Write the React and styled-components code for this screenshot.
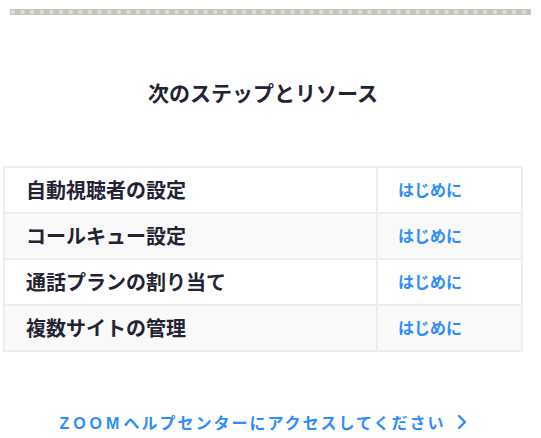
import React from "react";
import styled, { createGlobalStyle } from "styled-components";

const FONT = `"Noto Sans CJK JP", "Noto Sans", sans-serif`;
const BLUE = "#2D8CFF";
const INK = "#232333";
const LINE = "#ededed";

const GlobalStyle = createGlobalStyle`
  body {
    margin: 0;
    background: #ffffff;
    font-family: ${FONT};
  }
`;

const Page = styled.div({
  width: 541,
  height: 438,
  overflow: "hidden",
});

const DotBar = styled.div({
  margin: "9px 10px 0",
  height: 6,
  backgroundColor: "#c5c6b9",
  backgroundImage: "radial-gradient(circle, #dcdde3 2px, transparent 2.4px)",
  backgroundSize: "9.65px 6px",
  backgroundPosition: "-2px 0",
});

const Content = styled.div({
  width: 520,
  marginLeft: 3,
});

const Title = styled.h2({
  margin: "62px 0 0",
  height: 30,
  lineHeight: "30px",
  fontSize: 21,
  fontWeight: 700,
  color: INK,
  textAlign: "center",
});

const Table = styled.table({
  marginTop: 59,
  width: 520,
  borderCollapse: "collapse",
  border: `2px solid ${LINE}`,
  fontFamily: FONT,
});

const Row = styled.tr(({ $shaded }) => ({
  height: 46,
  background: $shaded ? "#f9f9f9" : "#ffffff",
}));

const NameCell = styled.td({
  border: `2px solid ${LINE}`,
  padding: "0 0 2px 21px",
  width: 350,
  fontSize: 20,
  fontWeight: 700,
  color: INK,
});

const LinkCell = styled.td({
  border: `2px solid ${LINE}`,
  padding: "0 0 2px 20px",
  fontSize: 16,
  fontWeight: 700,
  color: BLUE,
});

const Footer = styled.a({
  display: "flex",
  alignItems: "center",
  justifyContent: "center",
  gap: 11,
  marginTop: 58,
  fontSize: 16,
  fontWeight: 700,
  letterSpacing: 2,
  color: BLUE,
  textDecoration: "none",
  svg: {
    width: 10,
    height: 16,
  },
});

const Latin = styled.span({
  fontFamily: `"Liberation Sans", Arial, sans-serif`,
  letterSpacing: 4,
  fontWeight: 700,
});

const steps = [
  "自動視聴者の設定",
  "コールキュー設定",
  "通話プランの割り当て",
  "複数サイトの管理",
];

function Chevron() {
  return (
    <svg viewBox="0 0 10 16" fill="none">
      <path
        d="M2 2l6 6-6 6"
        stroke={BLUE}
        strokeWidth="2.4"
        strokeLinecap="round"
        strokeLinejoin="round"
      />
    </svg>
  );
}

export default function App() {
  return (
    <Page>
      <GlobalStyle />
      <DotBar />
      <Content>
        <Title>次のステップとリソース</Title>
        <Table>
          <tbody>
            {steps.map((step, i) => (
              <Row key={step} $shaded={i % 2 === 1}>
                <NameCell>{step}</NameCell>
                <LinkCell>はじめに</LinkCell>
              </Row>
            ))}
          </tbody>
        </Table>
        <Footer href="#">
          <span>
            <Latin>ZOOM</Latin>ヘルプセンターにアクセスしてください
          </span>
          <Chevron />
        </Footer>
      </Content>
    </Page>
  );
}
